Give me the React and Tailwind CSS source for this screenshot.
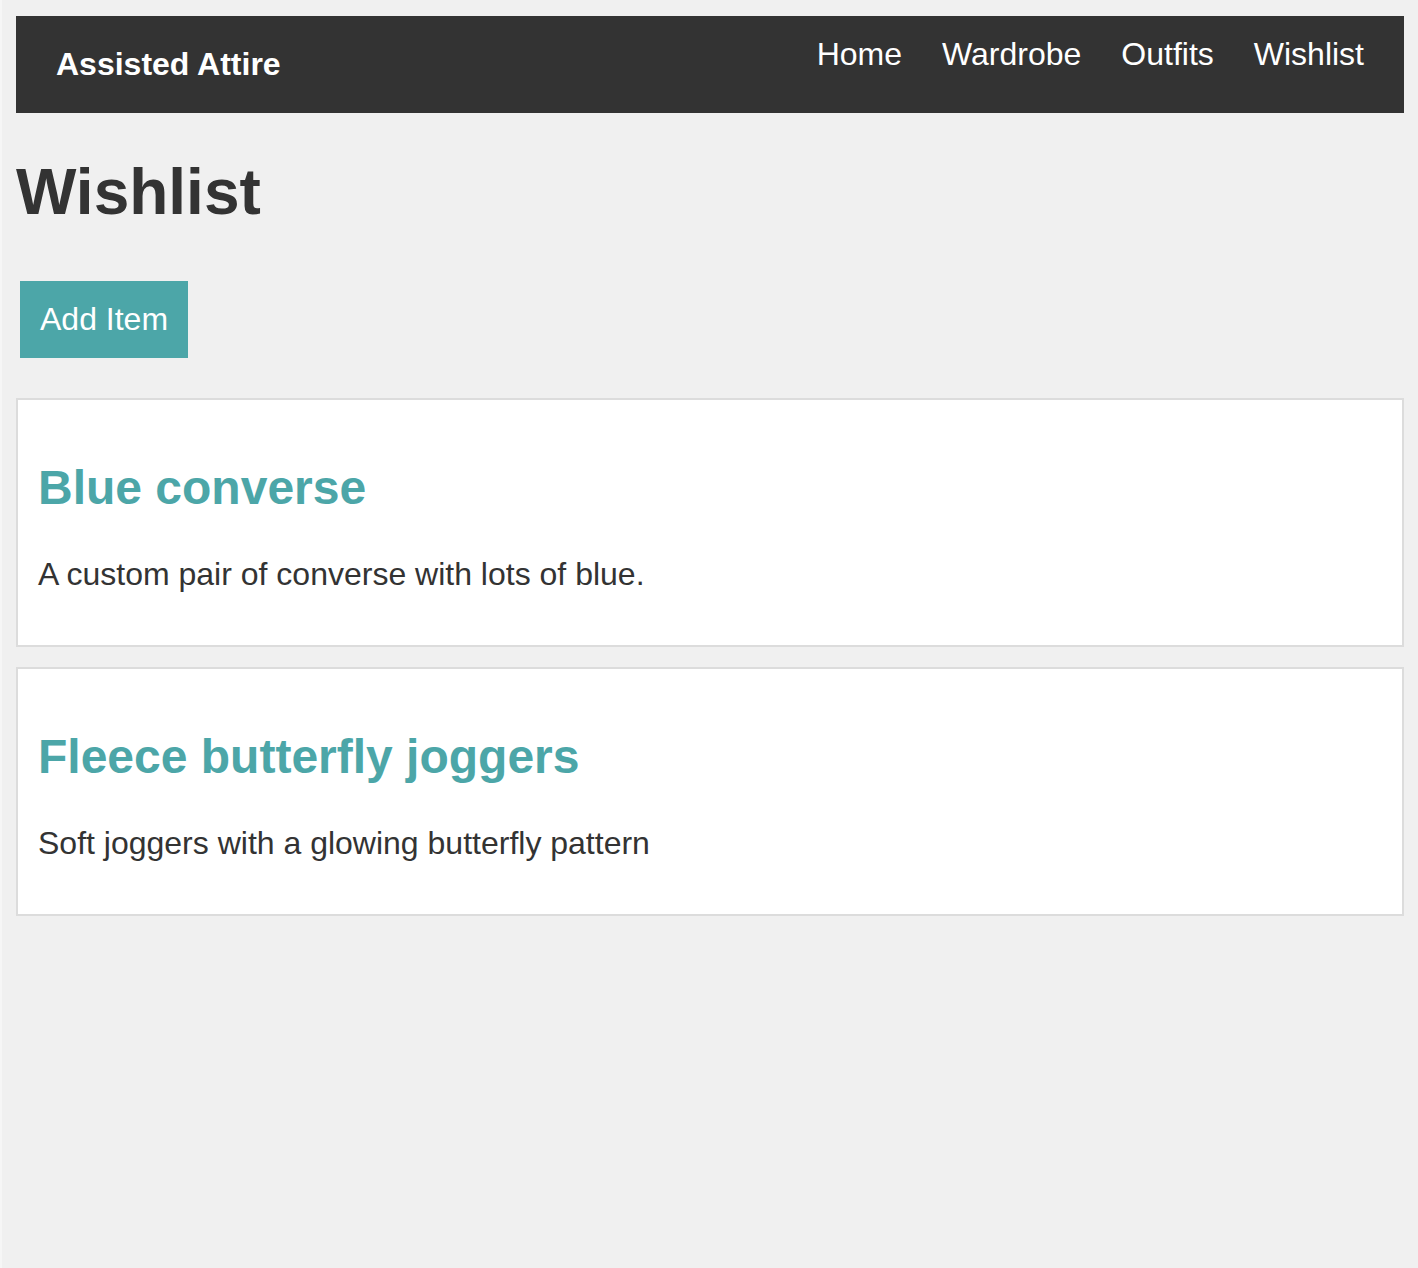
export default function App() {
  const items = [
    { title: "Blue converse", desc: "A custom pair of converse with lots of blue." },
    { title: "Fleece butterfly joggers", desc: "Soft joggers with a glowing butterfly pattern" },
  ];
  return (
    <div
      className="min-h-[1268px] border-l-2 border-[#f6f6f6] bg-[#f0f0f0] py-4 pl-[14px] pr-[14px] text-[#333]"
      style={{ fontFamily: '"Liberation Sans", Arial, Helvetica, sans-serif' }}
    >
      <header className="flex items-start justify-between bg-[#333] px-10 py-5">
        <div className="py-2.5 text-[32px] font-bold leading-[37px] text-white">Assisted Attire</div>
        <nav className="flex gap-10 text-[32px] leading-[37px] text-white">
          <a>Home</a>
          <a>Wardrobe</a>
          <a>Outfits</a>
          <a>Wishlist</a>
        </nav>
      </header>
      <h1 className="mt-[42px] mb-[52px] text-[64px] font-bold leading-[74px] text-[#333]">Wishlist</h1>
      <button className="ml-1 bg-[#4ca6a8] px-5 py-5 text-[32px] leading-[37px] text-white">Add Item</button>
      <div className="mt-10 flex flex-col gap-5">
        {items.map((it) => (
          <div key={it.title} className="border-2 border-[#dcdcdc] bg-white p-5">
            <h2 className="mt-10 mb-10 text-[48px] font-bold leading-[55px] text-[#4ca6a8]">{it.title}</h2>
            <p className="mt-0 mb-8 text-[32px] leading-[38px] text-[#333]">{it.desc}</p>
          </div>
        ))}
      </div>
    </div>
  );
}
